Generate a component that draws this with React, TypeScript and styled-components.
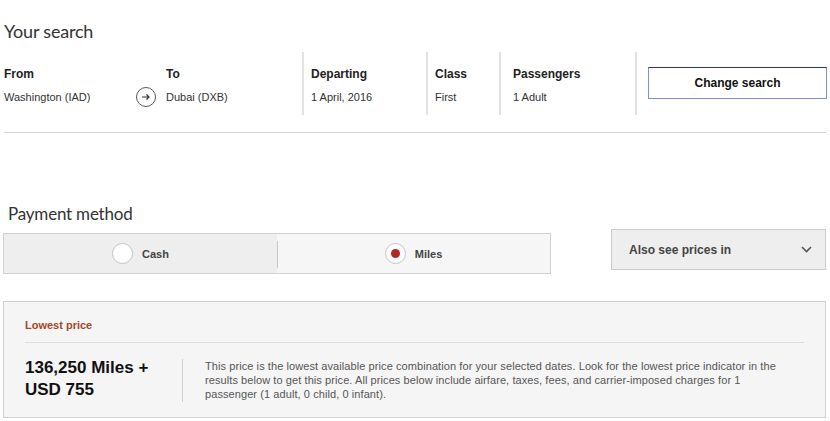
import React from "react";
import styled, { createGlobalStyle } from "styled-components";

const Global = createGlobalStyle`
  html, body { margin: 0; padding: 0; background: #fff; }
  body { font-family: "Liberation Sans", Arial, sans-serif; color: #222; }
  * { box-sizing: border-box; }
`;

const Page = styled.div`
  width: 830px;
  padding: 0 4px 0 3px;
`;

const Heading = styled.h1<{ $size: number; $indent: number }>`
  margin: 0;
  font-family: Lato, "Open Sans", sans-serif;
  font-weight: 400;
  font-size: ${(p) => p.$size}px;
  line-height: 24px;
  color: #333;
  padding-left: ${(p) => p.$indent}px;
  letter-spacing: -0.2px;
`;

const SearchHeading = styled(Heading)`
  padding-top: 19px;
`;

const SearchRow = styled.div`
  display: flex;
  margin-top: 9px;
  height: 63px;
  padding-left: 1px;
`;

const Column = styled.div<{ $w: number; $pad: number; $divider?: boolean }>`
  width: ${(p) => p.$w}px;
  padding-left: ${(p) => p.$pad}px;
  padding-top: 14px;
  border-left: ${(p) => (p.$divider ? "2px solid #e2e2e2" : "none")};
  flex-shrink: 0;
`;

const Label = styled.div`
  font-size: 12px;
  font-weight: 700;
  line-height: 16px;
  color: #222;
`;

const Value = styled.div`
  font-size: 11px;
  line-height: 16px;
  margin-top: 7px;
  color: #333;
`;

const ArrowCol = styled.div`
  width: 30px;
  flex-shrink: 0;
  padding-top: 35px;
  display: flex;
`;

const ArrowCircle = styled.div`
  width: 20px;
  height: 20px;
  border-radius: 50%;
  border: 1px solid #555;
  display: flex;
  align-items: center;
  justify-content: center;
`;

const ButtonCol = styled.div`
  flex: 1;
  border-left: 2px solid #e2e2e2;
  padding-left: 11px;
  padding-top: 15px;
`;

const ChangeButton = styled.button`
  width: 179px;
  height: 32px;
  background: #fff;
  border: 1px solid #7f8fdc;
  border-top-color: #24349a;
  font-family: "Liberation Sans", Arial, sans-serif;
  font-weight: 700;
  font-size: 12px;
  color: #111;
  padding: 0;
`;

const Rule = styled.hr`
  margin: 17px 0 0 1px;
  border: none;
  border-top: 1px solid #d4d4d4;
`;

const PaymentHeading = styled(Heading)`
  margin-top: 70px;
  font-size: 17px;
  line-height: 22px;
`;

const PaymentRow = styled.div`
  display: flex;
  align-items: flex-start;
  justify-content: space-between;
`;

const Toggle = styled.div`
  width: 548px;
  height: 41px;
  margin-top: 8px;
  border: 1px solid #d0d0d0;
  display: flex;
`;

const ToggleHalf = styled.div<{ $bg: string; $divider?: boolean }>`
  flex: 1;
  background: ${(p) => p.$bg};
  display: flex;
  align-items: center;
  justify-content: center;
  gap: 9px;
  position: relative;
  &::before {
    content: "";
    display: ${(p) => (p.$divider ? "block" : "none")};
    position: absolute;
    left: 0;
    top: 7px;
    bottom: 5px;
    width: 1px;
    background: #c8c8c8;
  }
`;

const Radio = styled.span<{ $checked?: boolean }>`
  width: 21px;
  height: 21px;
  border-radius: 50%;
  background: #fff;
  border: 1px solid #c4c4c4;
  display: flex;
  align-items: center;
  justify-content: center;
  &::after {
    content: "";
    display: ${(p) => (p.$checked ? "block" : "none")};
    width: 9px;
    height: 9px;
    border-radius: 50%;
    background: #b3291d;
  }
`;

const RadioText = styled.span`
  font-size: 11px;
  font-weight: 700;
  color: #444;
`;

const Select = styled.div`
  width: 215px;
  height: 41px;
  margin-top: 4px;
  background: #eeeeee;
  border: 1px solid #cccccc;
  display: flex;
  align-items: center;
  justify-content: space-between;
  padding: 0 13px 0 17px;
  font-size: 12px;
  font-weight: 700;
  color: #444;
`;

const PriceBox = styled.div`
  margin-top: 27px;
  height: 117px;
  background: #f5f5f5;
  border: 1px solid #d0d0d0;
  padding: 15px 21px 0 21px;
`;

const PriceTitle = styled.div`
  font-size: 11px;
  font-weight: 700;
  line-height: 16px;
  color: #9f4a26;
  padding-bottom: 9px;
  border-bottom: 1px solid #dedede;
`;

const PriceRow = styled.div`
  display: flex;
  margin-top: 16px;
  align-items: flex-start;
`;

const PriceAmount = styled.div`
  width: 157px;
  flex-shrink: 0;
  font-size: 17px;
  font-weight: 700;
  line-height: 22px;
  color: #111;
  margin-top: -2px;
`;

const PriceDivider = styled.div`
  width: 1px;
  height: 43px;
  background: #d0d0d0;
  flex-shrink: 0;
`;

const PriceNote = styled.p`
  margin: 0 0 0 22px;
  width: 580px;
  font-size: 11px;
  letter-spacing: 0.08px;
  line-height: 14px;
  color: #555;
`;

export default function App() {
  return (
    <Page>
      <Global />
      <SearchHeading as="h1" $size={18} $indent={1}>
        Your search
      </SearchHeading>
      <SearchRow>
        <Column $w={132} $pad={0}>
          <Label>From</Label>
          <Value>Washington (IAD)</Value>
        </Column>
        <ArrowCol>
          <ArrowCircle>
            <svg width="10" height="8" viewBox="0 0 10 8">
              <path
                d="M1 4h7M5.5 1.5L8 4 5.5 6.5"
                fill="none"
                stroke="#333"
                strokeWidth="1.2"
              />
            </svg>
          </ArrowCircle>
        </ArrowCol>
        <Column $w={136} $pad={0}>
          <Label>To</Label>
          <Value>Dubai (DXB)</Value>
        </Column>
        <Column $w={124} $pad={7} $divider>
          <Label>Departing</Label>
          <Value>1 April, 2016</Value>
        </Column>
        <Column $w={73} $pad={7} $divider>
          <Label>Class</Label>
          <Value>First</Value>
        </Column>
        <Column $w={136} $pad={12} $divider>
          <Label>Passengers</Label>
          <Value>1 Adult</Value>
        </Column>
        <ButtonCol>
          <ChangeButton>Change search</ChangeButton>
        </ButtonCol>
      </SearchRow>
      <Rule />
      <PaymentHeading as="h2" $size={17} $indent={5}>
        Payment method
      </PaymentHeading>
      <PaymentRow>
        <Toggle>
          <ToggleHalf $bg="#eeeeee">
            <Radio />
            <RadioText>Cash</RadioText>
          </ToggleHalf>
          <ToggleHalf $bg="#f6f6f6" $divider>
            <Radio $checked />
            <RadioText>Miles</RadioText>
          </ToggleHalf>
        </Toggle>
        <Select>
          <span>Also see prices in</span>
          <svg width="11" height="7" viewBox="0 0 11 7">
            <path
              d="M1 1l4.5 4.5L10 1"
              fill="none"
              stroke="#555"
              strokeWidth="1.6"
            />
          </svg>
        </Select>
      </PaymentRow>
      <PriceBox>
        <PriceTitle>Lowest price</PriceTitle>
        <PriceRow>
          <PriceAmount>
            136,250 Miles +
            <br />
            USD 755
          </PriceAmount>
          <PriceDivider />
          <PriceNote>
            This price is the lowest available price combination for your
            selected dates. Look for the lowest price indicator in the results
            below to get this price. All prices below include airfare, taxes,
            fees, and carrier-imposed charges for 1 passenger (1 adult, 0
            child, 0 infant).
          </PriceNote>
        </PriceRow>
      </PriceBox>
    </Page>
  );
}
